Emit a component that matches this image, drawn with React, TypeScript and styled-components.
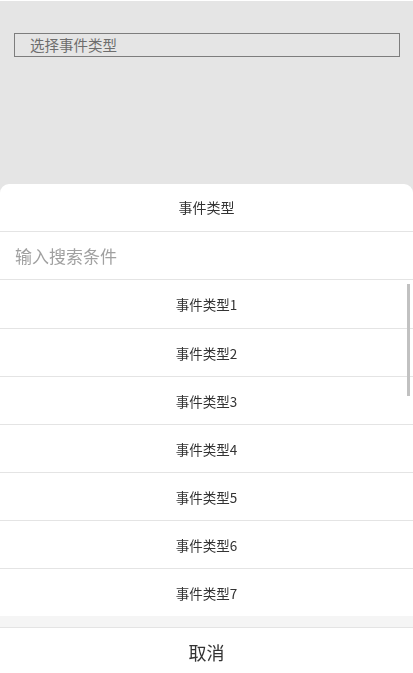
import React, { useRef, useState } from "react";
import styled, { createGlobalStyle } from "styled-components";

const GlobalStyle = createGlobalStyle`
  html, body {
    margin: 0;
    padding: 0;
    background: #ffffff;
    font-family: "Liberation Sans", "Noto Sans CJK SC", sans-serif;
  }
  * {
    box-sizing: border-box;
  }
`;

const ITEM_HEIGHT = 48;
const VISIBLE = 7;
const TOTAL = 21;

const types = Array.from({ length: TOTAL }, (_, i) => `事件类型${i + 1}`);

const App = (): JSX.Element => {
  const listRef = useRef<HTMLDivElement>(null);
  const [scrollTop, setScrollTop] = useState(0);

  const viewHeight = ITEM_HEIGHT * VISIBLE;
  const contentHeight = ITEM_HEIGHT * TOTAL;
  const thumbHeight = (viewHeight * viewHeight) / contentHeight;
  const thumbTop = 4 + (scrollTop / contentHeight) * viewHeight;

  return (
    <Page>
      <GlobalStyle />
      <SelectBox>
        <SelectPlaceholder>选择事件类型</SelectPlaceholder>
      </SelectBox>
      <Mask />
      <Sheet>
        <SheetTitle>事件类型</SheetTitle>
        <SearchInput placeholder="输入搜索条件" />
        <ListWrapper>
          <List
            ref={listRef}
            onScroll={() => setScrollTop(listRef.current?.scrollTop ?? 0)}
          >
            {types.map((t) => (
              <Option key={t}>{t}</Option>
            ))}
          </List>
          <Thumb style={{ top: thumbTop, height: thumbHeight }} />
        </ListWrapper>
        <Spacer />
        <CancelButton>取消</CancelButton>
      </Sheet>
    </Page>
  );
};

export default App;

const Page = styled.div`
  width: 100%;
  min-height: 673px;
  padding: 33px 13px 0 14px;
  background: #ffffff;
`;

const SelectBox = styled.div`
  height: 24px;
  border: 1px solid #8c8c8c;
  display: flex;
  align-items: center;
  padding-left: 15px;
`;

const SelectPlaceholder = styled.span`
  font-family: "Noto Sans CJK SC", sans-serif;
  font-size: 14.5px;
  color: #7a7a7a;
  line-height: 1;
`;

const Mask = styled.div`
  position: fixed;
  inset: 1px 0 0 0;
  background: rgba(0, 0, 0, 0.1);
`;

const Sheet = styled.div`
  position: fixed;
  left: 0;
  right: 0;
  bottom: 0;
  height: 489px;
  background: #ffffff;
  border-radius: 9px 9px 0 0;
  display: flex;
  flex-direction: column;
  overflow: hidden;
  font-family: "Noto Sans CJK SC", sans-serif;
`;

const SheetTitle = styled.div`
  height: 48px;
  flex: none;
  border-bottom: 1px solid #e4e4e4;
  display: flex;
  align-items: center;
  justify-content: center;
  padding-bottom: 2px;
  font-size: 14px;
  color: #333333;
`;

const SearchInput = styled.input`
  height: 48px;
  flex: none;
  border: none;
  border-bottom: 1px solid #e4e4e4;
  outline: none;
  padding: 0 15px;
  font-family: "Noto Sans CJK SC", sans-serif;
  font-size: 17px;
  color: #333333;
  background: #ffffff;

  &::placeholder {
    color: #a0a0a0;
  }
`;

const ListWrapper = styled.div`
  position: relative;
  height: ${ITEM_HEIGHT * VISIBLE}px;
  flex: none;
`;

const List = styled.div`
  height: 100%;
  overflow-y: auto;
  scrollbar-width: none;

  &::-webkit-scrollbar {
    display: none;
  }
`;

const Option = styled.div`
  height: ${ITEM_HEIGHT}px;
  display: flex;
  align-items: center;
  justify-content: center;
  font-size: 13.5px;
  color: #333333;
  cursor: pointer;

  & + & {
    border-top: 1px solid #e4e4e4;
  }
`;

const Thumb = styled.div`
  position: absolute;
  right: 3px;
  width: 3px;
  background: #c1c1c1;
  pointer-events: none;
`;

const Spacer = styled.div`
  height: 12px;
  flex: none;
  background: #f5f5f5;
  border-bottom: 1px solid #e4e4e4;
`;

const CancelButton = styled.div`
  flex: 1;
  display: flex;
  align-items: center;
  justify-content: center;
  padding-top: 2px;
  font-size: 18px;
  color: #333333;
  cursor: pointer;
`;
